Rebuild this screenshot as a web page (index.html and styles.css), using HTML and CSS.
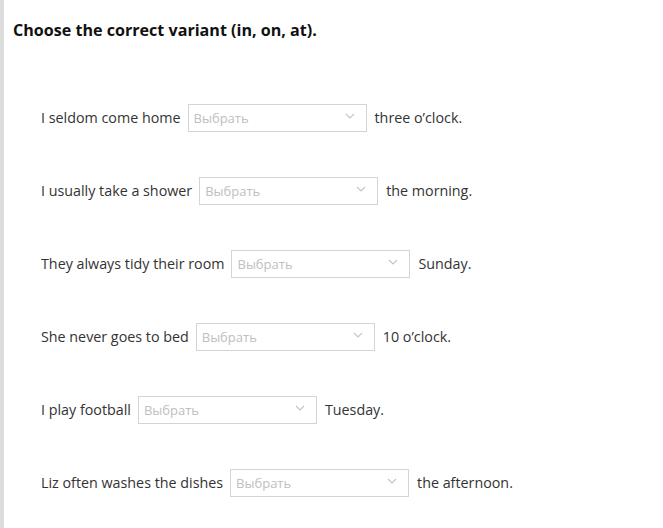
FILE: index.html
```html
<!DOCTYPE html>
<html>
<head>
<meta charset="utf-8">
<link rel="stylesheet" href="styles.css">
</head>
<body>
<div class="page">
  <h1 class="title">Choose the correct variant (in, on, at).</h1>
  <div class="rows">
    <div class="row"><span>I seldom come home</span><div class="sel"><span class="ph">Выбрать</span><svg class="chev" viewBox="0 0 10 6" width="10" height="6"><path d="M1 1l4 4 4-4" fill="none" stroke="#c4c4c4" stroke-width="1.1"/></svg></div><span>three o’clock.</span></div>
    <div class="row"><span>I usually take a shower</span><div class="sel"><span class="ph">Выбрать</span><svg class="chev" viewBox="0 0 10 6" width="10" height="6"><path d="M1 1l4 4 4-4" fill="none" stroke="#c4c4c4" stroke-width="1.1"/></svg></div><span>the morning.</span></div>
    <div class="row"><span>They always tidy their room</span><div class="sel"><span class="ph">Выбрать</span><svg class="chev" viewBox="0 0 10 6" width="10" height="6"><path d="M1 1l4 4 4-4" fill="none" stroke="#c4c4c4" stroke-width="1.1"/></svg></div><span>Sunday.</span></div>
    <div class="row"><span>She never goes to bed</span><div class="sel"><span class="ph">Выбрать</span><svg class="chev" viewBox="0 0 10 6" width="10" height="6"><path d="M1 1l4 4 4-4" fill="none" stroke="#c4c4c4" stroke-width="1.1"/></svg></div><span>10 o’clock.</span></div>
    <div class="row"><span>I play football</span><div class="sel"><span class="ph">Выбрать</span><svg class="chev" viewBox="0 0 10 6" width="10" height="6"><path d="M1 1l4 4 4-4" fill="none" stroke="#c4c4c4" stroke-width="1.1"/></svg></div><span>Tuesday.</span></div>
    <div class="row"><span>Liz often washes the dishes</span><div class="sel"><span class="ph">Выбрать</span><svg class="chev" viewBox="0 0 10 6" width="10" height="6"><path d="M1 1l4 4 4-4" fill="none" stroke="#c4c4c4" stroke-width="1.1"/></svg></div><span>the afternoon.</span></div>
  </div>
</div>
</body>
</html>
```
FILE: styles.css
```css
html, body {
  margin: 0;
  padding: 0;
  background: #fff;
}
body {
  font-family: "Open Sans", "Noto Sans", sans-serif;
  color: #333;
}
.page {
  border-left: 4px solid #dcdcdc;
  min-height: 528px;
  box-sizing: border-box;
  padding: 20px 0 0 9px;
}
.title {
  margin: 0;
  font-size: 16.1px;
  line-height: 21px;
  font-weight: 700;
  color: #111;
}
.rows {
  margin-top: 63px;
  padding-left: 28px;
  display: flex;
  flex-direction: column;
  gap: 46px;
}
.row {
  display: flex;
  align-items: center;
  height: 27px;
  font-size: 14.3px;
  gap: 7px;
}
.sel {
  width: 179px;
  height: 28px;
  box-sizing: border-box;
  border: 1px solid #d4d4d4;
  display: flex;
  align-items: center;
  justify-content: space-between;
  padding: 0 11px 0 5px;
  margin-right: 1px;
}
.ph {
  font-size: 13px;
  color: #c0c0c0;
}
.chev {
  display: block;
  margin-top: -3px;
}
```
